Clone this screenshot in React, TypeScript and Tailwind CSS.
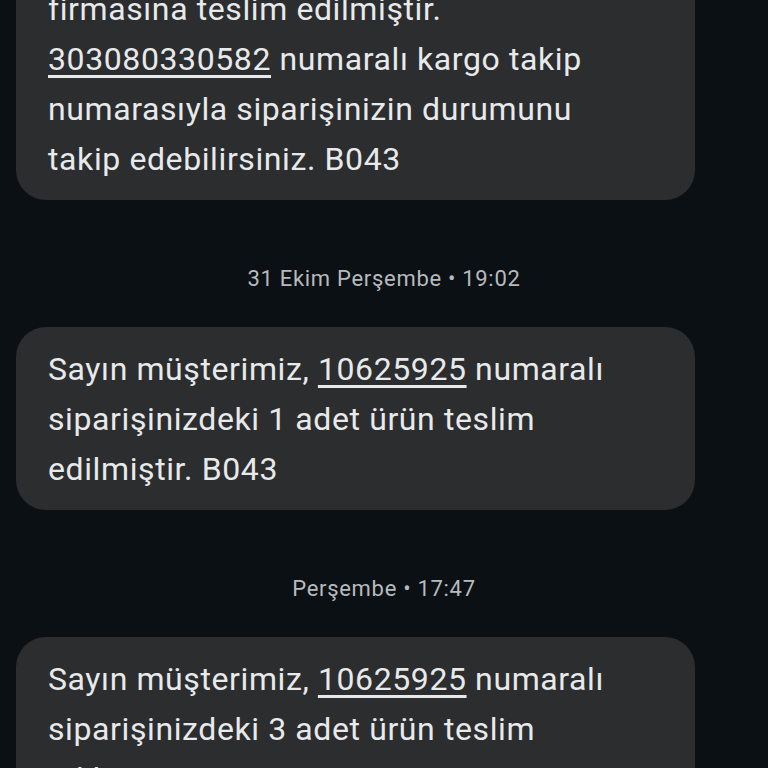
const Bubble = ({ lines, className = "" }: { lines: React.ReactNode[]; className?: string }) => (
  <div className={`mx-4 w-[679px] rounded-[30px] bg-[#2b2d2f] px-8 pt-[17px] pb-[16px] ${className}`}>
    {lines.map((line, i) => (
      <div key={i} className="whitespace-nowrap text-[32px] leading-[50px] tracking-[0.6px] text-[#e8e9ea]">
        {line}
      </div>
    ))}
  </div>
);

const Link = ({ children }: { children: React.ReactNode }) => (
  <span className="underline decoration-[3px] underline-offset-[5px]">{children}</span>
);

const Stamp = ({ text }: { text: string }) => (
  <div className="flex h-[127px] justify-center pt-[64px] text-[22px] leading-[30px] tracking-[0.7px] text-[#b6babe]">
    {text}
  </div>
);

export default function App() {
  return (
    <div
      className="h-[768px] w-[768px] overflow-hidden bg-[#0b1014]"
      style={{ fontFamily: "Roboto, 'Noto Sans', sans-serif" }}
    >
      <Bubble
        className="-mt-[33px]"
        lines={[
          "firmasına teslim edilmiştir.",
          <>
            <Link>303080330582</Link> numaralı kargo takip
          </>,
          "numarasıyla siparişinizin durumunu",
          "takip edebilirsiniz. B043",
        ]}
      />
      <Stamp text="31 Ekim Perşembe • 19:02" />
      <Bubble
        lines={[
          <>
            Sayın müşterimiz, <Link>10625925</Link> numaralı
          </>,
          "siparişinizdeki 1 adet ürün teslim",
          "edilmiştir. B043",
        ]}
      />
      <Stamp text="Perşembe • 17:47" />
      <Bubble
        lines={[
          <>
            Sayın müşterimiz, <Link>10625925</Link> numaralı
          </>,
          "siparişinizdeki 3 adet ürün teslim",
          "edilmiştir. B043",
        ]}
      />
    </div>
  );
}
